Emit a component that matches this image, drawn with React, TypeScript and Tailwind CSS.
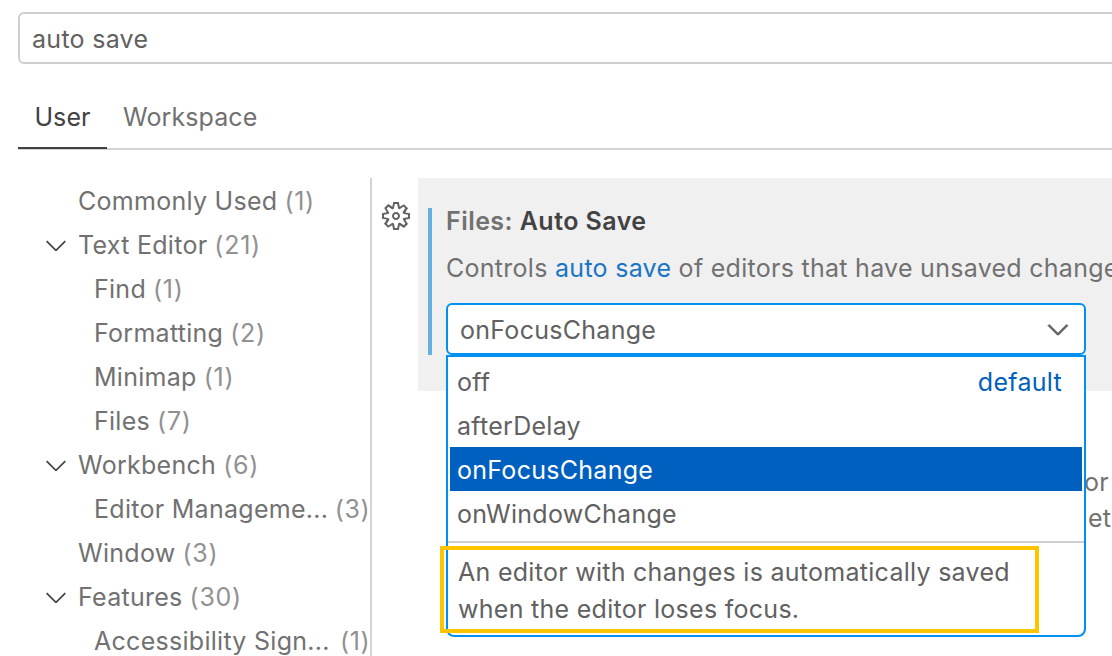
import React from "react";

function Chevron({ className }: { className: string }) {
  return (
    <svg viewBox="0 0 16 16" fill="currentColor" className={className}>
      <path d="M7.976 10.072l4.357-4.357.62.618L8.284 11h-.618L3 6.333l.619-.618 4.357 4.357z" />
    </svg>
  );
}

function Gear() {
  return (
    <svg viewBox="0 0 16 16" fill="currentColor" fillRule="evenodd" clipRule="evenodd" className="mt-[22px] ml-2 h-8 w-8 shrink-0 text-[#616161]">
      <path d="M9.1 4.4L8.6 2H7.4l-.5 2.4-.7.3-2-1.3-.9.8 1.3 2-.2.7-2.4.5v1.2l2.4.5.3.8-1.3 2 .8.8 2-1.3.8.3.4 2.3h1.2l.5-2.4.8-.3 2 1.3.8-.8-1.3-2 .3-.8 2.3-.4V7.4l-2.4-.5-.3-.8 1.3-2-.8-.8-2 1.3-.7-.2zM9.4 1l.5 2.4L12 2.1l2 2-1.4 2.1 2.4.4v2.8l-2.4.5L14 12l-2 2-2.1-1.4-.5 2.4H6.6l-.5-2.4L4 13.9l-2-2 1.4-2.1L1 9.4V6.6l2.4-.5L2.1 4l2-2 2.1 1.4.4-2.4h2.8zm.6 7c0 1.1-.9 2-2 2s-2-.9-2-2 .9-2 2-2 2 .9 2 2zM8 9c.6 0 1-.4 1-1s-.4-1-1-1-1 .4-1 1 .4 1 1 1z" />
    </svg>
  );
}

type Item = { label: string; count: number; open?: boolean; nested?: boolean; clipped?: boolean };

const items: Item[] = [
  { label: "Commonly Used", count: 1 },
  { label: "Text Editor", count: 21, open: true },
  { label: "Find", count: 1, nested: true },
  { label: "Formatting", count: 2, nested: true },
  { label: "Minimap", count: 1, nested: true },
  { label: "Files", count: 7, nested: true },
  { label: "Workbench", count: 6, open: true },
  { label: "Editor Manageme...", count: 3, nested: true, clipped: true },
  { label: "Window", count: 3 },
  { label: "Features", count: 30, open: true },
  { label: "Accessibility Sign...", count: 1, nested: true, clipped: true },
];

function TreeRow({ item }: { item: Item }) {
  return (
    <li className="flex h-11 items-center pl-10">
      <span className="flex w-[38px] shrink-0">{item.open && <Chevron className="h-8 w-8 text-[#424242]" />}</span>
      <span className={item.nested ? "ml-4 pt-0.5" : "pt-0.5"}>{item.label}</span>
      <span
        className={
          item.clipped
            ? "ml-auto pt-0.5 tracking-[0.5px] text-[#919191]"
            : "ml-[7px] pt-0.5 tracking-[0.7px] text-[#919191]"
        }
      >
        ({item.count})
      </span>
    </li>
  );
}

const options = ["off", "afterDelay", "onFocusChange", "onWindowChange"];

function Dropdown() {
  return (
    <div className="absolute top-[52px] left-0 h-[282px] w-[640px] rounded-b-lg border-2 border-[#0090f1] bg-white">
      <ul className="px-0.5 pt-0.5">
        {options.map((option) => (
          <li
            key={option}
            className={
              option === "onFocusChange"
                ? "flex h-11 items-center bg-[#0060c0] pt-[3px] pl-[7px] text-white"
                : "flex h-11 items-center justify-between pt-[3px] pr-5 pl-[7px]"
            }
          >
            <span>{option}</span>
            {option === "off" && <span className="text-[#0060c0]">default</span>}
          </li>
        ))}
      </ul>
      <p className="mt-[6px] border-t-2 border-[#cecece] pt-[11px] pl-[10px] leading-[37px]">
        An editor with changes is automatically saved
        <br />
        when the editor loses focus.
      </p>
      <div className="absolute top-[189px] left-[-8px] h-[87px] w-[599px] border-4 border-[#ffc400]" />
    </div>
  );
}

export default function App() {
  return (
    <div className="flex h-[656px] w-[1112px] flex-col overflow-hidden bg-white pl-[18px] font-['Inter',sans-serif] text-[25px] font-[430] tracking-[0.28px] whitespace-nowrap text-[#616161]">
      <div className="mt-3 flex h-[52px] w-[1110px] shrink-0 items-center rounded-md border-2 border-[#cecece] pt-[3px] pl-3">auto save</div>
      <nav className="mt-[22px] flex h-16 shrink-0 border-b-2 border-[#d3d3d3] tracking-[0.1px]">
        <span className="-mb-0.5 flex h-[63px] w-[89px] justify-center border-b-2 border-[#424242] pt-[13px] text-[#424242]">User</span>
        <span className="ml-4 pt-[13px] text-[#717171]">Workspace</span>
      </nav>
      <div className="-ml-[18px] mt-7 flex h-[478px] shrink-0">
        <ul className="w-[372px] shrink-0 border-r-2 border-[#d3d3d3] pt-px text-[#717171]">
          {items.map((item) => (
            <TreeRow key={item.label} item={item} />
          ))}
        </ul>
        <div className="w-[46px] shrink-0">
          <Gear />
        </div>
        <main className="w-[694px] shrink-0 overflow-hidden">
          <section className="flex h-[213px] bg-[#f0f0f0] pt-[30px] pl-[10px]">
            <div className="h-[147px] w-1 shrink-0 bg-[#66afe0]" />
            <div className="ml-[14px]">
              <h2 className="-mt-1 h-[34px] leading-[34px] font-semibold tracking-[0.45px]">
                <span className="text-[#717171]">Files: </span>
                <span className="text-[#424242]">Auto Save</span>
              </h2>
              <p className="mt-[13px] h-[34px] leading-[34px] text-[#717171]">
                Controls <span className="text-[#1a76c4]">auto save</span> of editors that have unsaved changes
              </p>
              <div className="relative mt-[18px] h-[52px] w-[640px]">
                <div className="flex h-full items-center justify-between rounded-md border-2 border-[#0090f1] bg-white pr-[10px] pl-3">
                  <span className="pt-[3px]">onFocusChange</span>
                  <Chevron className="h-8 w-8 stroke-current stroke-[0.4]" />
                </div>
                <Dropdown />
              </div>
            </div>
          </section>
          <p className="mt-[73px] pl-[666px] leading-9 text-[#717171]">
            or
            <br />
            <span className="ml-1">et</span>
          </p>
        </main>
      </div>
    </div>
  );
}
